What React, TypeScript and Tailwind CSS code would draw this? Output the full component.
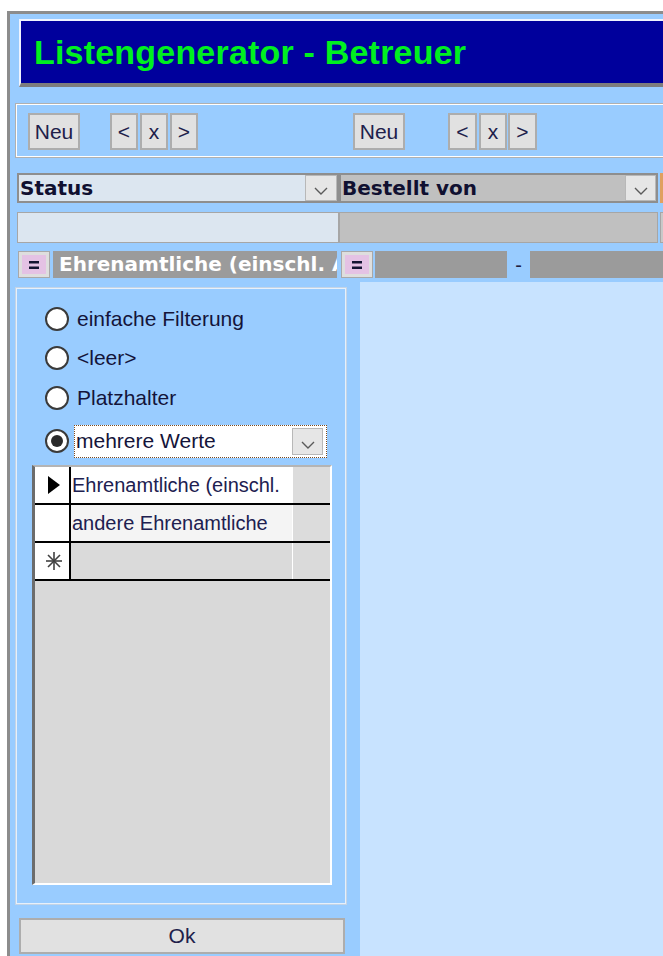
import React from "react";

const ui = "font-['Liberation_Sans',Arial,sans-serif]";
const bold = "font-['DejaVu_Sans',Verdana,sans-serif] font-bold";

function Chevron() {
  return (
    <svg width="14" height="8" viewBox="0 0 14 8">
      <polyline points="1,1 7,7 13,1" fill="none" stroke="#5a5a5a" strokeWidth="1.4" />
    </svg>
  );
}

function DropButton({ className = "" }: { className?: string }) {
  return (
    <div
      className={`flex items-end justify-center pb-[5px] bg-[#e6e6e6] border border-[#b8b8b8] ${className}`}
    >
      <Chevron />
    </div>
  );
}

function NavButton({ label, className = "" }: { label: string; className?: string }) {
  return (
    <div
      className={`h-[37px] flex items-center justify-center bg-[#e1e1e1] border-2 border-[#adadad] text-[21px] text-[#20204a] ${ui} ${className}`}
    >
      {label}
    </div>
  );
}

function EqButton() {
  return (
    <div className="w-[32px] h-[27px] flex items-center justify-center bg-[#dedede] border border-[#a8a8a8]">
      <div className="w-[24px] h-[19px] bg-[#e4c2e4] flex items-center justify-center">
        <svg width="10" height="8" viewBox="0 0 10 8">
          <rect x="0" y="0" width="10" height="2.5" fill="#141432" />
          <rect x="0" y="5.5" width="10" height="2.5" fill="#141432" />
        </svg>
      </div>
    </div>
  );
}

function Radio({ checked = false }: { checked?: boolean }) {
  return (
    <div className="w-[24px] h-[24px] rounded-full border-2 border-[#3a3a3a] bg-white flex items-center justify-center shrink-0">
      {checked && <div className="w-[12px] h-[12px] rounded-full bg-[#2a2a2a]" />}
    </div>
  );
}

function GridRow({
  selector,
  text,
  bg,
  sideBg,
}: {
  selector: React.ReactNode;
  text: string;
  bg: string;
  sideBg: string;
}) {
  return (
    <div className="flex h-[38px] border-b-2 border-black">
      <div className="w-[36px] bg-white border-r-2 border-black flex items-center justify-center pl-[3px]">
        {selector}
      </div>
      <div className={`w-[221px] flex items-center pl-[1px] text-[20px] text-[#202050] overflow-hidden whitespace-nowrap ${ui} ${bg}`}>
        {text}
      </div>
      <div className={`flex-1 border-l border-white ${sideBg}`} />
    </div>
  );
}

export default function App() {
  const options = [
    { label: "einfache Filterung", h: "h-[39px]" },
    { label: "<leer>", h: "h-[40px]" },
    { label: "Platzhalter", h: "h-[40px]" },
  ];

  return (
    <div className="w-[663px] h-[956px] overflow-hidden bg-white">
      <div className="ml-[7px] mt-[11px] w-[720px] h-[945px] border-l-[3px] border-t-[3px] border-[#8c8c8c] bg-[#99ccff] flex flex-col">
        {/* title bar */}
        <div className="ml-[9px] mt-[5px] h-[68px] border-l-2 border-t-2 border-[#eef3ff] border-b-4 border-b-[#7d7d7d] bg-[#00009c] flex items-center pl-[13px]">
          <span className={`text-[34px] font-bold text-[#00f020] tracking-[0.2px] ${ui}`}>
            Listengenerator - Betreuer
          </span>
        </div>

        {/* navigation toolbar */}
        <div className="ml-[5px] mt-[16px] h-[55px] border border-[#b0b0b0]">
          <div className="h-full border border-white flex pt-[8px] pl-[11px]">
            <NavButton label="Neu" className="w-[52px]" />
            <NavButton label="<" className="w-[28px] ml-[30px]" />
            <NavButton label="x" className="w-[28px] ml-[2px]" />
            <NavButton label=">" className="w-[28px] ml-[2px]" />
            <NavButton label="Neu" className="w-[52px] ml-[155px]" />
            <NavButton label="<" className="w-[29px] ml-[43px]" />
            <NavButton label="x" className="w-[28px] ml-[2px]" />
            <NavButton label=">" className="w-[29px] ml-[1px]" />
          </div>
        </div>

        {/* column headers */}
        <div className="ml-[7px] mt-[15px] h-[30px] flex">
          <div className="w-[322px] border-2 border-[#8e8e8e] bg-[#dce6f0] flex items-stretch">
            <span className={`flex-1 pl-[1px] text-[20px] leading-[26px] text-[#101030] ${bold}`}>Status</span>
            <DropButton className="w-[32px]" />
          </div>
          <div className="w-[319px] border-2 border-[#8e8e8e] bg-[#c0c0c0] flex items-stretch">
            <span className={`flex-1 pl-[1px] text-[20px] leading-[26px] text-[#101030] ${bold}`}>Bestellt von</span>
            <DropButton className="w-[31px]" />
          </div>
          <div className="w-[20px] ml-[2px] border-l-[3px] border-[#e0a060] bg-[#c0c0c0]" />
        </div>

        {/* value fields */}
        <div className="ml-[7px] mt-[9px] h-[31px] flex">
          <div className="w-[322px] border border-[#a6a6a6] bg-[#dce6f0]" />
          <div className="w-[319px] border border-[#a6a6a6] bg-[#c0c0c0]" />
          <div className="w-[20px] ml-[2px] border border-[#a6a6a6] bg-[#c8c8c8]" />
        </div>

        {/* comparison row */}
        <div className="ml-[8px] mt-[8px] h-[27px] flex items-center">
          <EqButton />
          <div className={`ml-[3px] w-[284px] h-[27px] bg-[#9b9b9b] pl-[6px] text-[20px] leading-[27px] text-white overflow-hidden whitespace-nowrap ${bold}`}>
            Ehrenamtliche (einschl. A
          </div>
          <div className="ml-[4px]">
            <EqButton />
          </div>
          <div className="ml-[2px] w-[132px] h-[27px] bg-[#9b9b9b]" />
          <span className={`w-[23px] text-center text-[20px] text-[#202040] ${ui}`}>-</span>
          <div className="w-[140px] h-[27px] bg-[#9b9b9b]" />
        </div>

        {/* body */}
        <div className="mt-[4px] flex-1 flex">
          <div className="w-[350px] flex flex-col">
            <div className="ml-[5px] mt-[5px] w-[332px] h-[618px] border border-[#c4d4e6]">
              <div className="h-full border border-[#e6f0fb] flex flex-col pt-[10px]">
                {options.map((o) => (
                  <div key={o.label} className={`ml-[28px] flex items-center ${o.h}`}>
                    <Radio />
                    <span className={`ml-[8px] text-[21px] text-[#14143a] ${ui}`}>{o.label}</span>
                  </div>
                ))}
                <div className="ml-[28px] mt-[6px] h-[34px] flex items-center">
                  <Radio checked />
                  <div className="ml-[5px] w-[253px] h-[33px] border border-dotted border-[#7a4a20] bg-white flex items-center">
                    <span className={`flex-1 pl-[1px] text-[21px] text-[#14143a] ${ui}`}>mehrere Werte</span>
                    <DropButton className="w-[31px] h-[27px] mr-[3px]" />
                  </div>
                </div>

                {/* list of chosen values */}
                <div className="ml-[15px] mt-[7px] w-[300px] h-[420px] border-l-[3px] border-l-[#6c6c6c] border-t-2 border-t-[#b4b4b4] border-r-2 border-r-white border-b-2 border-b-white bg-[#d9d9d9]">
                  <GridRow
                    selector={
                      <svg width="12" height="18" viewBox="0 0 12 18">
                        <polygon points="0,0 12,9 0,18" fill="#000" />
                      </svg>
                    }
                    text="Ehrenamtliche (einschl."
                    bg="bg-white"
                    sideBg="bg-[#dcdcdc]"
                  />
                  <GridRow selector={null} text="andere Ehrenamtliche" bg="bg-[#f4f4f4]" sideBg="bg-[#dcdcdc]" />
                  <GridRow
                    selector={
                      <svg width="18" height="20" viewBox="0 0 18 20">
                        <g stroke="#404040" strokeWidth="1.6">
                          <line x1="9" y1="1" x2="9" y2="19" />
                          <line x1="1" y1="10" x2="17" y2="10" />
                          <line x1="3" y1="4" x2="15" y2="16" />
                          <line x1="15" y1="4" x2="3" y2="16" />
                        </g>
                      </svg>
                    }
                    text=""
                    bg="bg-[#dadada]"
                    sideBg="bg-[#dadada]"
                  />
                </div>
              </div>
            </div>

            <div
              className={`ml-[9px] mt-[13px] w-[326px] h-[36px] flex items-center justify-center bg-[#e1e1e1] border-2 border-[#adadad] text-[21px] text-[#20204a] ${ui}`}
            >
              Ok
            </div>
          </div>
          <div className="flex-1 bg-[#c8e3ff]" />
        </div>
      </div>
    </div>
  );
}
